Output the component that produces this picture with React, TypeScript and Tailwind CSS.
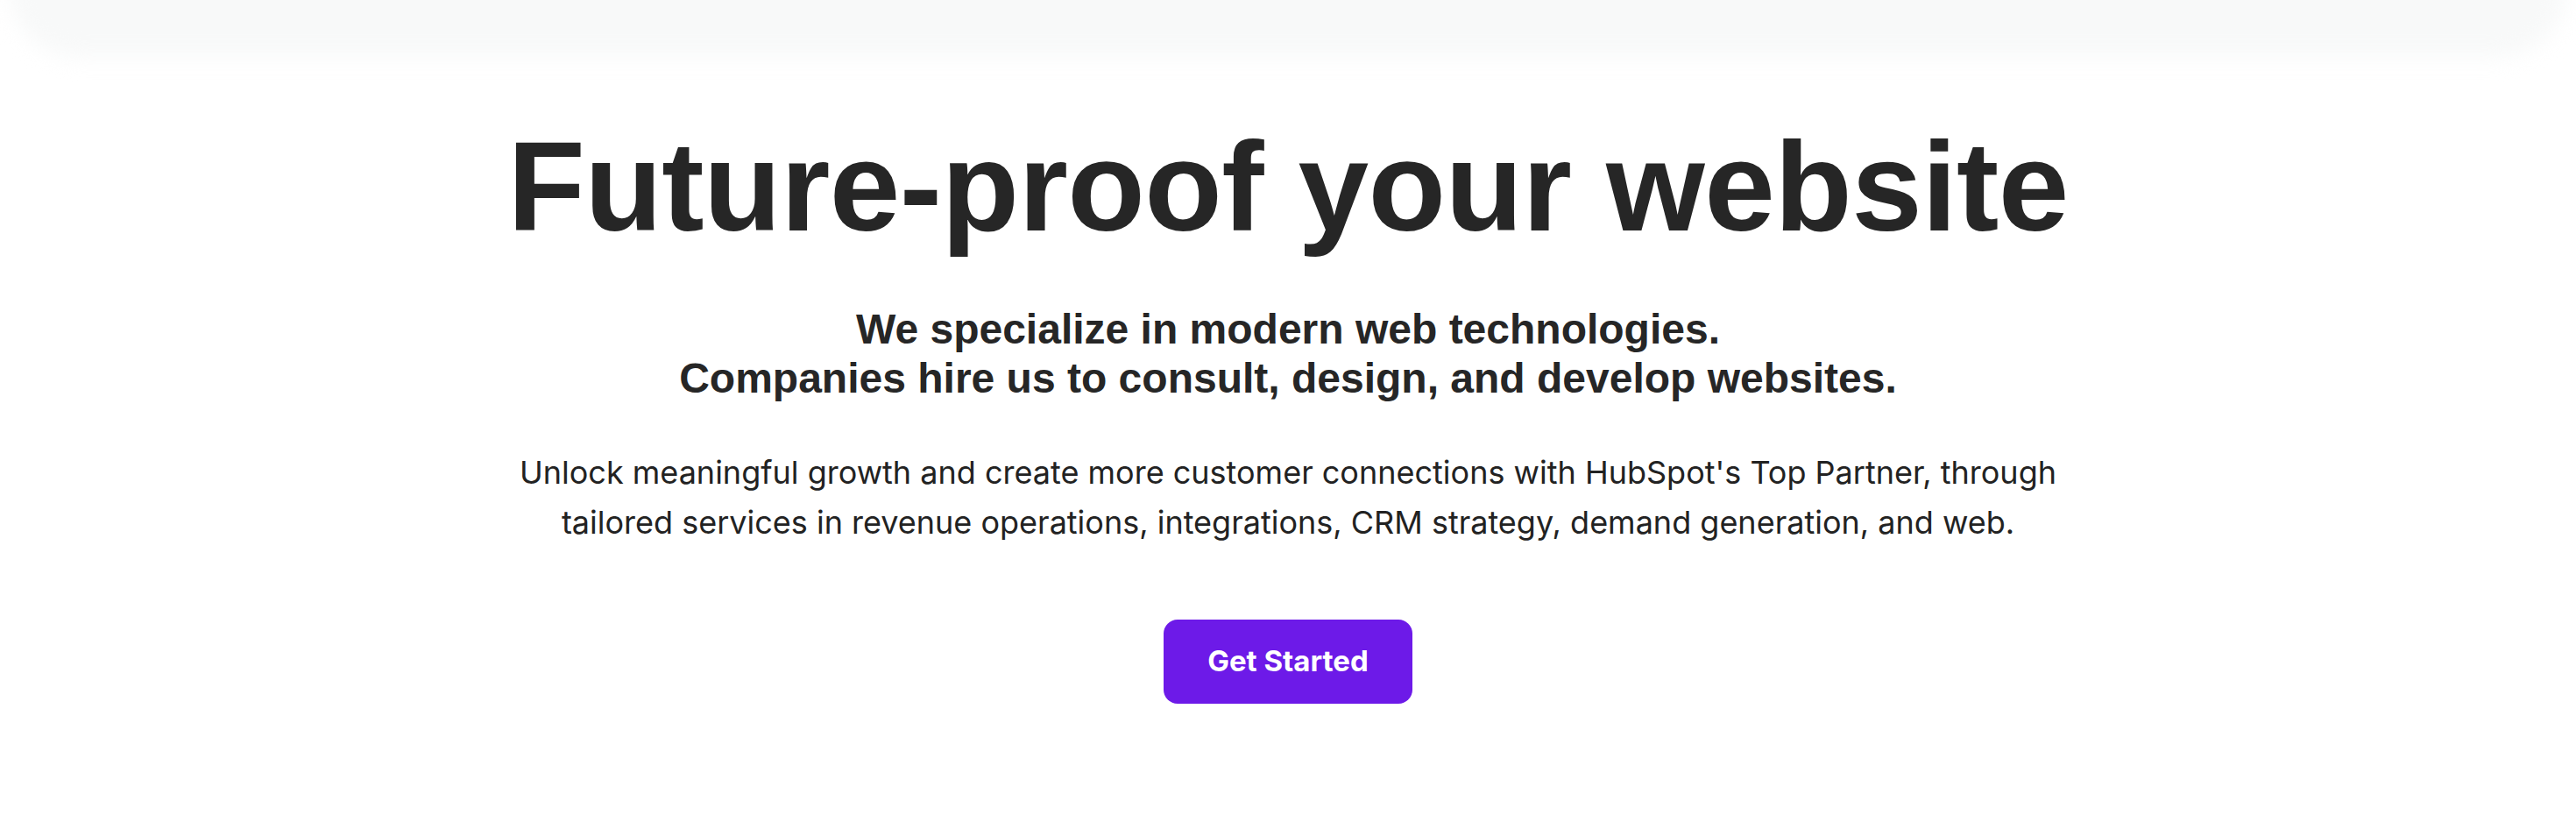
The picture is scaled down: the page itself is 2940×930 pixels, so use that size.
import React from "react";

export default function App() {
  return (
    <div className="relative min-h-[930px] w-full overflow-hidden bg-white">
      <div className="absolute left-[10px] right-[10px] top-[-40px] h-[105px] rounded-b-[80px] bg-[#f8f9f9] blur-[12px]" />
      <div className="relative flex flex-col items-center pt-[141px]">
        <h1 className="font-['Liberation_Sans',Arial,sans-serif] text-[145px] font-bold leading-none tracking-[-0.6px] text-[#262626]">
          Future-proof your website
        </h1>
        <h2 className="mt-[62px] text-center font-['Liberation_Sans',Arial,sans-serif] text-[48px] font-bold leading-[56px] text-[#262626]">
          We specialize in modern web technologies.
          <br />
          Companies hire us to consult, design, and develop websites.
        </h2>
        <p className="mt-[51px] text-center font-['Inter',sans-serif] text-[36px] leading-[57px] text-[#222222]">
          Unlock meaningful growth and create more customer connections with HubSpot's Top Partner, through
          <br />
          tailored services in revenue operations, integrations, CRM strategy, demand generation, and web.
        </p>
        <button className="mt-[82px] flex h-[96px] w-[284px] items-center justify-center rounded-[16px] bg-[#6d1ae8] font-['Inter',sans-serif] text-[33px] font-bold text-white">
          Get Started
        </button>
      </div>
    </div>
  );
}
